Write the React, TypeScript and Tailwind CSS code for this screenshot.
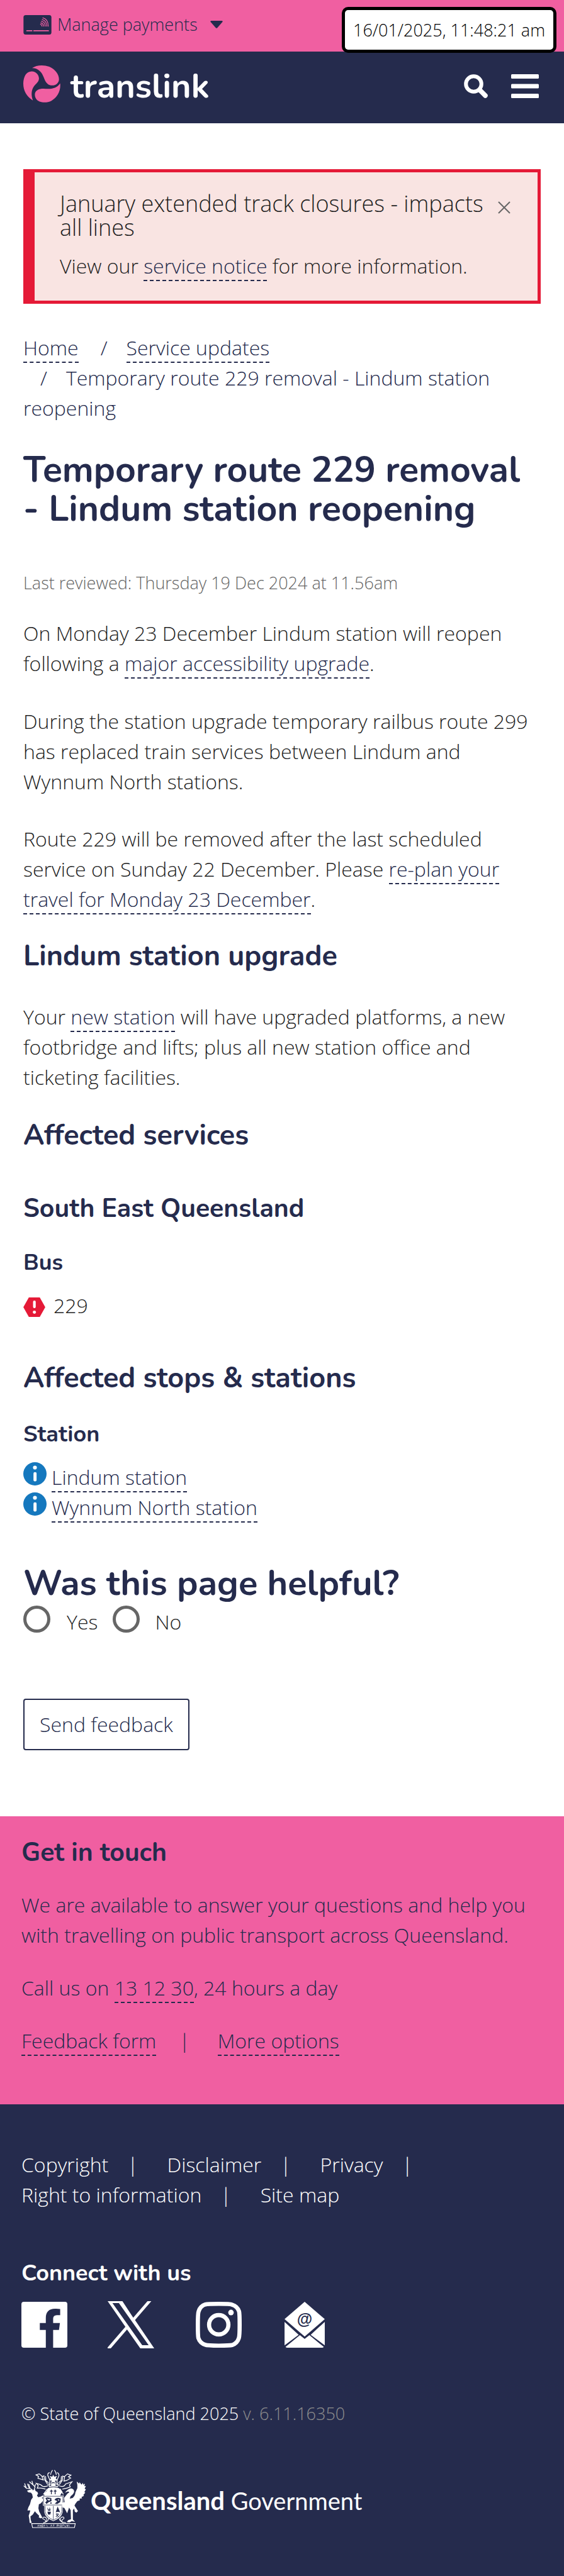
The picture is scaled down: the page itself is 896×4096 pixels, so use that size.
import type { ReactNode } from "react";

const link = "border-b-2 border-dashed border-[#252b4d] pb-px text-[#252b4d]";

function DashedLink({ href, children }: { href: string; children: ReactNode }) {
  return (
    <a href={href} className={link}>
      {children}
    </a>
  );
}

function CardIcon() {
  return (
    <svg viewBox="28 27 176 123" className="h-[31px] w-[45px]" aria-hidden="true">
      <rect x="28" y="27" width="176" height="123" rx="14" fill="#252b4d" />
      <g fill="none" stroke="#f05fa1" strokeWidth="5" strokeLinecap="round">
        <path d="M150 44Q184 52 184 97M146 55Q174 62 175 97M141 66Q164 70 165 97M137 76Q154 80 155 97M135 85Q144 87 145 97" />
        <path d="M49 126H81M93 126H185" strokeWidth="7" />
      </g>
    </svg>
  );
}

function SwirlLogo() {
  return (
    <svg viewBox="24 350 232 232" className="size-[59px]" aria-hidden="true">
      <g fill="#f05fa1">
        <path d="M79 367C104 348 150 345 186 358C225 374 248 410 247 438C245 462 226 474 206 475C184 476 170 463 160 444C150 420 143 398 126 384C112 372 94 366 79 367Z" />
        <path d="M84 569C45 545 24 508 24 463C25 420 42 387 77 387C104 387 123 410 122 434C120 455 104 463 90 482C74 504 72 537 84 569Z" />
        <path d="M254 462C260 505 238 550 200 571C175 584 148 584 126 576C102 566 94 545 97 525C102 505 120 495 150 495C190 500 233 497 254 462Z" />
      </g>
    </svg>
  );
}

function SearchIcon() {
  return (
    <svg viewBox="0 0 38 38" className="size-[38px]" fill="none" stroke="#fff" aria-hidden="true">
      <circle cx="15.5" cy="15.5" r="12.3" strokeWidth="6" />
      <path d="M25 25L34 34" strokeWidth="7.5" strokeLinecap="round" />
    </svg>
  );
}

function MenuIcon() {
  return (
    <svg viewBox="0 0 44 38" className="h-[38px] w-[44px]" fill="#fff" aria-hidden="true">
      <rect width="44" height="7" rx="1.5" />
      <rect y="15.5" width="44" height="7" rx="1.5" />
      <rect y="31" width="44" height="7" rx="1.5" />
    </svg>
  );
}

function InfoIcon() {
  return (
    <svg viewBox="0 0 48 48" className="size-[37px] shrink-0" aria-hidden="true">
      <circle cx="24" cy="24" r="24" fill="#1578be" />
      <circle cx="24" cy="11" r="4" fill="#fff" />
      <rect x="21" y="20.5" width="6.4" height="19" rx="3" fill="#fff" />
    </svg>
  );
}

function AlertIcon() {
  return (
    <svg viewBox="0 0 46 41" className="h-[31px] w-[35px] shrink-0" aria-hidden="true">
      <path d="M11.5 0H34.5L46 20.5L34.5 41H11.5L0 20.5Z" fill="#e51a37" />
      <rect x="20.4" y="6.5" width="5.6" height="16" rx="2.6" fill="#fff" />
      <circle cx="23.2" cy="31" r="3.3" fill="#fff" />
    </svg>
  );
}

function FacebookIcon() {
  return (
    <svg viewBox="0 0 96 96" className="size-[73px]" aria-hidden="true">
      <rect width="96" height="96" rx="5" fill="#fff" />
      <path d="M51 96V59H38.5V44.3H51V34C51 21 58 14.5 70 14.5Q76 14.3 81 15V27.8H74Q66.300 28 66.300 35V44.300H80.500L78.500 59H66.300V96Z" fill="#252b4d" />
    </svg>
  );
}

function XIcon() {
  return (
    <svg viewBox="0 0 97 98.300" className="h-[75px] w-[74px]" fill="#fff" aria-hidden="true">
      <path fillRule="evenodd" d="M0 0H30.800L53.300 34.300L83 0H91L57 39.300L97 98.300H68L40.400 59L6.500 98.300H0V96.500L37 53.300ZM10 3.800L72 91.700H85.400L23.400 3.800Z" />
    </svg>
  );
}

function InstagramIcon() {
  return (
    <svg viewBox="0 0 96 96" className="size-[73px]" fill="none" stroke="#fff" strokeWidth="8.7" aria-hidden="true">
      <path d="M48 4.350C66 4.350 72 4.500 76 6C84 8.500 88.500 14 90.500 20C91.500 24 91.650 30 91.650 48C91.650 66 91.500 72 90 76C87.500 84 82 88.500 76 90.500C72 91.500 66 91.650 48 91.650C30 91.650 24 91.500 20 90C12 87.500 7.500 82 5.500 76C4.500 72 4.350 66 4.350 48C4.350 30 4.500 24 6 20C8.500 12 14 7.500 20 5.500C24 4.500 30 4.350 48 4.350Z" />
      <circle cx="48" cy="48" r="20.200" />
      <circle cx="73.600" cy="22.400" r="5.800" fill="#fff" stroke="none" />
    </svg>
  );
}

function MailIcon() {
  return (
    <svg viewBox="0 0 84 96" className="h-[73px] w-[64px]" fill="#fff" aria-hidden="true">
      <path d="M42 0L84 36.300L42 72.600L0 36.300Z" />
      <path d="M0 42L29.500 69L0 91ZM84 42L54.500 69L84 91ZM2 94.500L32 69.700L42 77.700L52 69.700L82 94.500Q81 96 79 96H5Q3 96 2 94.500Z" />
      <text x="42" y="47" textAnchor="middle" fontFamily="Liberation Sans, sans-serif" fontWeight="700" fontSize="33" fill="#252b4d">
        @
      </text>
    </svg>
  );
}

function CoatOfArms() {
  return (
    <svg viewBox="24 22 396 368" className="h-[93px] w-[100px]" fill="#fff" aria-hidden="true">
      {/* stag */}
      <path d="M47 155L62 149L76 147L84 152L98 145L101 156L113 162L117 172L110 184L118 195L131 192L146 184L150 190L140 200L148 206L146 220L134 234L122 240L119 264L124 285L136 308L144 324L134 328L121 322L124 312L104 292L97 283L84 304L69 316L71 338L77 357L64 356L62 334L58 312L64 294L68 278L50 278L56 258L66 240L73 212L84 196L80 176L72 166L56 164Z" />
      <g fill="none" stroke="#fff" strokeWidth="5">
        <path d="M82 150L67 140L44 139L27 123M44 139L32 108M62 139L50 110M67 140L58 112M92 148L98 130L86 118L62 97M86 118L78 92M96 130L101 112" />
        {/* mantling */}
        <path d="M190 40Q176 42 178 58L190 84Q194 104 182 116M236 40Q250 44 248 60L238 84Q232 104 244 116M208 24Q196 40 196 54M220 24Q230 36 232 54" />
        <path d="M146 66L124 48L104 54L120 64L116 76L150 86L142 66L154 60L158 84L178 116M282 66L302 48L324 56L308 66L322 74L296 90L280 94L284 66L272 62L270 88L250 116M164 62L166 90L182 104M264 62L262 90L246 104" />
        <path d="M182 122Q150 136 134 116L106 108L118 122L112 138Q140 134 164 144M246 122Q280 136 290 112L330 98L314 118L320 130Q300 138 270 144M176 142L150 178M256 142L276 178" />
      </g>
      {/* crest and helmet */}
      <path fillRule="evenodd" d="M212 54L219 66L236 60L228 76L240 88L222 92L232 106L212 100L194 106L204 92L188 86L198 76L190 60L206 66ZM184 112Q213 100 246 112L242 132Q213 124 186 132ZM190 116V124L200 122V114ZM226 114V122L240 126V116ZM180 138Q213 126 248 138L262 152L270 160L256 184H158L152 172L168 160ZM198 148V154H192V159H198V176H203V159H209V154H203V148ZM222 148V154H216V159H222V176H227V159H233V154H227V148Z" />
      {/* shield */}
      <path d="M147 184H278V248L272 250V288Q264 326 213 346Q162 326 156 288V250L147 248Z" />
      <g fill="none" stroke="#252b4d" strokeWidth="3">
        <path d="M152 189H273V244H152ZM161 250V286Q168 318 213 339Q258 318 267 286V250M213 250V340" />
      </g>
      <g fill="#252b4d">
        <path d="M163 200L176 196L200 200L202 220L184 226L170 238L162 228L172 218ZM220 212Q234 192 260 204L256 226L238 238L222 236L238 220ZM194 228h8v8h-8zM174 258L180 280H194L200 258L194 276L190 256L186 276ZM176 286H198L194 304H180ZM240 254L228 290Q240 284 256 290Z" />
      </g>
      <path d="M172 204L186 208L194 202L190 216L180 214ZM240 208L252 212L246 218Z" />
      <path d="M229 300L247 318M247 300L229 318M232 298L248 302" stroke="#252b4d" strokeWidth="4" />
      {/* brolga */}
      <path d="M286 166Q304 142 326 140Q344 144 344 160Q340 176 322 188L316 204L334 200Q350 186 352 164L364 138Q366 116 360 96L376 110L378 100L390 116L400 104L400 116L412 110L408 126L418 124L410 142L418 146L408 162L414 166L402 180L406 186L390 194L394 202L378 204L380 214L364 220Q352 234 346 248L368 282L358 292L348 286L344 266L336 276V336L350 350L328 346L316 354L298 352L306 340L324 334L322 276L312 260L300 296L282 262L268 258V230L284 226L280 200L302 172L314 164L306 158Z" />
      <g fill="none" stroke="#fff" strokeWidth="4.500">
        <path d="M160 352Q182 338 164 322Q146 316 146 330Q162 336 168 348M150 356Q184 350 182 328M274 356Q248 340 262 322Q282 314 280 330Q266 336 266 348M292 356Q250 352 250 328" />
        <path d="M77 361H351L346 386H82Z" />
      </g>
      <path d="M114 380L118 369L122 380M128 380V369L136 380V369M142 369V380H148V369ZM156 380V369L162 375M170 369L176 380M196 380L200 369L205 380M210 370H220M215 370V380M236 380V369H244V375H236M250 369V380M258 369V380H264V369ZM272 380V369H278V375M286 369V380H292M298 380V369L304 380V369M310 369L314 380" fill="none" stroke="#fff" strokeWidth="2.500" />
    </svg>
  );
}

const h2 = "font-['Nunito',sans-serif] text-[45px] leading-[54px] font-bold text-[#252b4d]";
const h4 = "font-['Nunito',sans-serif] text-[36px] leading-[44px] font-bold";

const legal = ["Copyright", "Disclaimer", "Privacy", "Right to information", "Site map"];

export default function App() {
  return (
    <div className="relative flex min-h-screen flex-col bg-white font-['Open_Sans',sans-serif] text-[32px] leading-[48px] font-light text-[#1f1f1f]">
      <time className="absolute top-[11px] right-3 rounded-[10px] border-5 border-black bg-white px-[13px] text-[27px] leading-[63px] whitespace-nowrap text-black">
        16/01/2025, 11:48:21 am
      </time>

      <div className="bg-[#f05fa1] px-[37px] pt-[19px] pb-[23px]">
        <button type="button" className="flex items-center text-[27px] leading-[40px] text-[#252b4d]">
          <CardIcon />
          <span className="ml-[9px]">Manage payments</span>
          <svg viewBox="0 0 20 12" className="ml-5 h-3 w-5" aria-hidden="true">
            <path d="M1.500 0H18.500Q20.500 .5 19.300 2L11 11.400Q10 12.300 9 11.400L.7 2Q-.5 .5 1.500 0Z" fill="#252b4d" />
          </svg>
        </button>
      </div>

      <header className="flex items-start justify-between bg-[#252b4d] px-[37px] pt-[22px] pb-[26px]">
        <a href="#home" className="flex items-start gap-4 text-white">
          <SwirlLogo />
          <span className="font-['Nunito',sans-serif] text-[54px] leading-[66px] font-bold">translink</span>
        </a>
        <div className="flex h-[66px] items-center gap-[37px] pr-[3px]">
          <button type="button" aria-label="Search"><SearchIcon /></button>
          <button type="button" aria-label="Menu"><MenuIcon /></button>
        </div>
      </header>

      <main className="px-[37px] pt-[73px] pb-[105px]">
        <section className="border-5 border-l-[18px] border-[#e51a37] bg-[#f9e4e2] pt-[31px] pr-[43px] pb-[31px] pl-[40px]">
          <div className="flex items-start">
            <h2 className="flex-1 text-[36px] leading-[38px]">January extended track closures - impacts all lines</h2>
            <button type="button" aria-label="Close" className="mt-[15px] flex w-[22px] justify-end">
              <svg viewBox="0 0 20 20" className="size-5" stroke="#666" strokeWidth="2" aria-hidden="true">
                <path d="M1 1L19 19M19 1L1 19" />
              </svg>
            </button>
          </div>
          <p className="mt-[18px]">
            View our <DashedLink href="#notice">service notice</DashedLink> for more information.
          </p>
        </section>

        <nav aria-label="Breadcrumb" className="mt-[46px] text-[#252b4d]">
          <ol className="flex flex-wrap gap-x-2">
            <li><DashedLink href="#home">Home</DashedLink></li>
            <li><span className="pr-[30px] pl-[27px]">/</span><DashedLink href="#updates">Service updates</DashedLink></li>
            <li><span className="pr-[30px] pl-[27px]">/</span>Temporary route 229 removal - Lindum station reopening</li>
          </ol>
        </nav>

        <h1 className="mt-[43px] font-['Nunito',sans-serif] text-[57px] leading-[62px] font-bold text-[#252b4d]">
          Temporary route 229 removal - Lindum station reopening
        </h1>
        <p className="mt-[67px] text-[27px] leading-[40px] text-[#666]">Last reviewed: Thursday 19 Dec 2024 at 11.56am</p>

        <p className="mt-9">
          On Monday 23 December Lindum station will reopen following a{" "}
          <DashedLink href="#upgrade">major accessibility upgrade</DashedLink>.
        </p>
        <p className="mt-11">
          During the station upgrade temporary railbus route 299 has replaced train services between Lindum and Wynnum North stations.
        </p>
        <p className="mt-[43px]">
          Route 229 will be removed after the last scheduled service on Sunday 22 December. Please{" "}
          <DashedLink href="#plan">re-plan your travel for Monday 23 December</DashedLink>.
        </p>

        <h2 className={`mt-10 ${h2}`}>Lindum station upgrade</h2>
        <p className="mt-[45px]">
          Your <DashedLink href="#station">new station</DashedLink> will have upgraded platforms, a new footbridge and lifts; plus all new station office and ticketing facilities.
        </p>

        <h2 className={`mt-[42px] ${h2}`}>Affected services</h2>
        <h3 className="mt-[65px] font-['Nunito',sans-serif] text-[41px] leading-[48px] font-bold text-[#252b4d]">South East Queensland</h3>
        <h4 className={`mt-10 text-[#252b4d] ${h4}`}>Bus</h4>
        <ul className="mt-[22px]">
          <li className="flex items-center gap-[13px]"><span className="pt-1"><AlertIcon /></span>229</li>
        </ul>

        <h2 className={`mt-[65px] ${h2}`}>Affected stops &amp; stations</h2>
        <h4 className={`mt-10 text-[#252b4d] ${h4}`}>Station</h4>
        <ul className="mt-[22px]">
          <li className="flex items-start gap-2"><InfoIcon /><span><DashedLink href="#lindum">Lindum station</DashedLink></span></li>
          <li className="flex items-start gap-2"><InfoIcon /><span><DashedLink href="#wynnum">Wynnum North station</DashedLink></span></li>
        </ul>

        <form className="pt-[66px]">
          <fieldset>
            <legend className="font-['Nunito',sans-serif] text-[56px] leading-[62px] font-bold text-[#252b4d]">Was this page helpful?</legend>
            <div className="mt-1 flex items-start">
              <input id="yes" name="helpful" type="radio" className="size-[43px] appearance-none rounded-full border-5 border-[#666]" />
              <label htmlFor="yes" className="mr-6 pt-[7px] pl-[26px] leading-[38px]">Yes</label>
              <input id="no" name="helpful" type="radio" className="size-[43px] appearance-none rounded-full border-5 border-[#666]" />
              <label htmlFor="no" className="pt-[7px] pl-6 leading-[38px]">No</label>
            </div>
          </fieldset>
          <button type="button" className="mt-[103px] rounded-[4px] border-2 border-[#252b4d] px-6 py-[15px] text-[#252b4d]">Send feedback</button>
        </form>
      </main>

      <section className="bg-[#f05fa1] px-[34px] pt-[33px] pb-[77px] text-[#252b4d]">
        <h3 className="font-['Nunito',sans-serif] text-[41px] leading-[50px] font-bold">Get in touch</h3>
        <p className="mt-[34px]">We are available to answer your questions and help you with travelling on public transport across Queensland.</p>
        <p className="mt-9">Call us on <DashedLink href="tel:131230">13 12 30</DashedLink>, 24 hours a day</p>
        <p className="mt-9">
          <DashedLink href="#feedback">Feedback form</DashedLink>
          <span className="pr-11 pl-9">|</span>
          <DashedLink href="#options">More options</DashedLink>
        </p>
      </section>

      <footer className="grow bg-[#252b4d] px-[34px] pt-[72px] pb-[70px] text-white">
        <ul className="flex flex-wrap">
          {legal.map((name, i) => (
            <li key={name}>
              <a href="#legal">{name}</a>
              {i < legal.length - 1 && <span className="pr-[46px] pl-[30px]">|</span>}
            </li>
          ))}
        </ul>

        <h4 className={`mt-[79px] ${h4}`}>Connect with us</h4>
        <div className="mt-[22px] flex items-center">
          <a href="#facebook" aria-label="Facebook"><FacebookIcon /></a>
          <a href="#x" aria-label="X" className="ml-16"><XIcon /></a>
          <a href="#instagram" aria-label="Instagram" className="ml-[66px]"><InstagramIcon /></a>
          <a href="#email" aria-label="Email" className="ml-[68px]"><MailIcon /></a>
        </div>

        <p className="mt-[84px] text-[27px] leading-[40px]">
          © State of Queensland 2025 <span className="text-[#8e8e8e]">v. 6.11.16350</span>
        </p>

        <a href="#government" className="mt-[69px] flex items-center gap-[7px]">
          <span className="pl-[3px]"><CoatOfArms /></span>
          <span className="pt-1 font-['Lato',sans-serif] text-[40px] leading-[48px] font-bold">
            Queensland <span className="text-[38px] font-normal">Government</span>
          </span>
        </a>
      </footer>
    </div>
  );
}
